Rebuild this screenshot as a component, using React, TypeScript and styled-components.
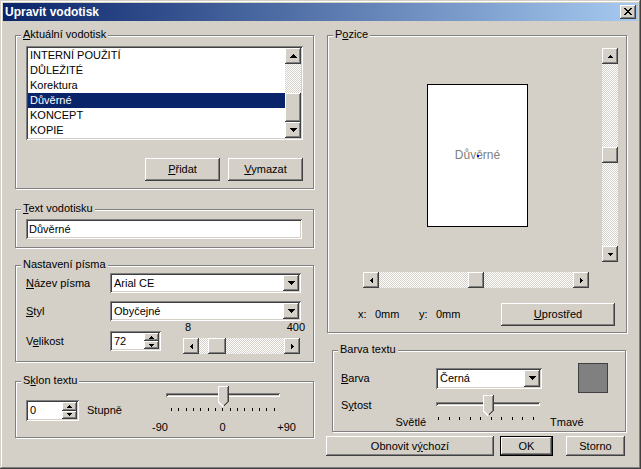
import React from 'react';
import styled, { createGlobalStyle, css } from 'styled-components';

const FACE = '#D4D0C8';

const GlobalStyle = createGlobalStyle`
  html, body { margin: 0; padding: 0; background: ${FACE}; }
  *, *::before, *::after { box-sizing: border-box; }
`;

const raised = css`
  background: ${FACE};
  box-shadow: inset -1px -1px #404040, inset 1px 1px #fff, inset -2px -2px #808080, inset 2px 2px ${FACE};
`;

const sunken = css`
  background: #fff;
  box-shadow: inset 1px 1px #808080, inset -1px -1px #fff, inset 2px 2px #404040, inset -2px -2px ${FACE};
`;

const checker = css`
  background-color: #fff;
  background-image: conic-gradient(${FACE} 25%, transparent 0 50%, ${FACE} 0 75%, transparent 0);
  background-size: 2px 2px;
`;

const Window = styled.div`
  width: 641px;
  height: 469px;
  padding: 3px;
  background: ${FACE};
  box-shadow: inset -1px -1px #404040, inset 1px 1px ${FACE}, inset -2px -2px #808080, inset 2px 2px #fff;
  font-family: "Liberation Sans", Arial, sans-serif;
  font-size: 11px;
  line-height: 13px;
  color: #000;
  display: flex;
  flex-direction: column;
`;

const TitleBar = styled.div`
  height: 18px;
  flex: none;
  display: flex;
  align-items: center;
  justify-content: space-between;
  padding: 0 2px 0 2px;
  background: linear-gradient(to right, #0a246a, #a6caf0);
  color: #fff;
  font-weight: bold;
  font-size: 12px;
`;

const CloseButton = styled.div`
  ${raised};
  width: 16px;
  height: 14px;
  display: flex;
  align-items: center;
  justify-content: center;
  padding-bottom: 1px;
`;

const Body = styled.div`
  flex: 1;
  display: flex;
  gap: 12px;
  padding: 14px 0 0 12px;
`;

const Column = styled.div<{ $w: number }>`
  width: ${p => p.$w}px;
  display: flex;
  flex-direction: column;
`;

const Group = styled.div<{ $h: number; $mt?: number; $ml?: number; $w?: number; $pad: string }>`
  position: relative;
  flex: none;
  height: ${p => p.$h}px;
  width: ${p => (p.$w ? `${p.$w}px` : 'auto')};
  margin-top: ${p => p.$mt ?? 0}px;
  margin-left: ${p => p.$ml ?? 0}px;
  padding: ${p => p.$pad};
  border: 1px solid #808080;
  box-shadow: inset 1px 1px #fff, 1px 1px #fff;
`;

const Caption = styled.span`
  position: absolute;
  top: -8px;
  left: 5px;
  padding: 0 2px;
  background: ${FACE};
  line-height: 13px;
`;

const ListBox = styled.div`
  ${sunken};
  width: 277px;
  height: 94px;
  padding: 2px;
  display: flex;
`;

const ListItems = styled.div`
  flex: 1;
  overflow: hidden;
`;

const ListRow = styled.div<{ $selected?: boolean }>`
  height: 15px;
  line-height: 15px;
  padding-left: 2px;
  white-space: nowrap;
  background: ${p => (p.$selected ? '#0a246a' : 'transparent')};
  color: ${p => (p.$selected ? '#fff' : '#000')};
`;

const ButtonRow = styled.div<{ $mt?: number }>`
  display: flex;
  justify-content: flex-end;
  gap: 8px;
  margin-top: ${p => p.$mt ?? 0}px;
`;

const Button = styled.button<{ $w: number; $h: number; $ml?: number; $default?: boolean }>`
  ${raised};
  border: 0;
  margin: 0 0 0 ${p => p.$ml ?? 0}px;
  padding: 0;
  flex: none;
  width: ${p => p.$w}px;
  height: ${p => p.$h}px;
  font: inherit;
  color: #000;
  ${p =>
    p.$default &&
    css`
      box-shadow: inset 0 0 0 1px #000, inset -2px -2px #404040, inset 2px 2px #fff, inset -3px -3px #808080;
    `}
`;

const TextField = styled.div<{ $w: number }>`
  ${sunken};
  width: ${p => p.$w}px;
  height: 20px;
  padding: 2px 2px 2px 3px;
  line-height: 16px;
`;

const FormRow = styled.div<{ $mt?: number; $end?: boolean }>`
  display: flex;
  align-items: ${p => (p.$end ? 'flex-end' : 'center')};
  margin-top: ${p => p.$mt ?? 0}px;
`;

const FieldLabel = styled.span<{ $w: number; $mb?: number }>`
  width: ${p => p.$w}px;
  flex: none;
  margin-bottom: ${p => p.$mb ?? 0}px;
`;

const ComboBox = styled.div<{ $w: number; $h?: number }>`
  ${sunken};
  width: ${p => p.$w}px;
  height: ${p => p.$h ?? 20}px;
  padding: 2px;
  display: flex;
  align-items: stretch;
`;

const ComboText = styled.span`
  flex: 1;
  padding-left: 2px;
  display: flex;
  align-items: center;
`;

const DropButton = styled.div`
  ${raised};
  width: 16px;
  flex: none;
  display: flex;
  align-items: center;
  justify-content: center;
`;

const SpinBox = styled.div<{ $w: number; $h: number; $mt?: number; $mb?: number }>`
  ${sunken};
  width: ${p => p.$w}px;
  height: ${p => p.$h}px;
  margin-top: ${p => p.$mt ?? 0}px;
  margin-bottom: ${p => p.$mb ?? 0}px;
  padding: 2px;
  display: flex;
  flex: none;
`;

const SpinText = styled.span`
  flex: 1;
  padding-left: 2px;
  display: flex;
  align-items: center;
`;

const SpinButtons = styled.div`
  width: 15px;
  display: flex;
  flex-direction: column;
`;

const SpinButton = styled.div`
  ${raised};
  flex: 1;
  display: flex;
  align-items: center;
  justify-content: center;
`;

const SizeScale = styled.div`
  width: 117px;
  margin-left: 22px;
  display: flex;
  flex-direction: column;
`;

const ScaleLabels = styled.div<{ $mt?: number; $pl?: number; $pr?: number }>`
  display: flex;
  justify-content: space-between;
  margin-top: ${p => p.$mt ?? 0}px;
  padding-left: ${p => p.$pl ?? 0}px;
  margin-right: ${p => -(p.$pr ?? 0)}px;
`;

const Scroll = styled.div<{ $vertical?: boolean; $length: number; $mt?: number }>`
  display: flex;
  flex: none;
  flex-direction: ${p => (p.$vertical ? 'column' : 'row')};
  width: ${p => (p.$vertical ? 16 : p.$length)}px;
  height: ${p => (p.$vertical ? p.$length : 16)}px;
  margin-top: ${p => p.$mt ?? 0}px;
`;

const ScrollButton = styled.div`
  ${raised};
  width: 16px;
  height: 16px;
  flex: none;
  display: flex;
  align-items: center;
  justify-content: center;
`;

const Gutter = styled.div<{ $size?: number }>`
  ${checker};
  flex: ${p => (p.$size != null ? `0 0 ${p.$size}px` : '1 1 0')};
`;

const Thumb = styled.div<{ $size: number }>`
  ${raised};
  flex: 0 0 ${p => p.$size}px;
`;

const TiltGrid = styled.div`
  display: grid;
  grid-template-columns: 61px 65px 144px;
  align-items: start;
`;

const UnitText = styled.span`
  margin-top: 18px;
`;

const SliderBlock = styled.div`
  display: flex;
  flex-direction: column;
`;

const TrackWrap = styled.div<{ $w: number; $ml?: number }>`
  width: ${p => p.$w}px;
  margin-left: ${p => p.$ml ?? 0}px;
`;

const Track = styled.div`
  position: relative;
  height: 21px;
  padding-top: 7px;
`;

const Groove = styled.div`
  height: 4px;
  background: ${FACE};
  box-shadow: inset 1px 1px #808080, inset -1px -1px #fff, inset 2px 2px #404040, inset -2px -2px ${FACE};
`;

const ThumbHolder = styled.div`
  position: absolute;
  top: 0;
  left: calc(50% - 5px);
  width: 11px;
  height: 21px;
`;

const TickRow = styled.div<{ $pl: number; $pr: number; $mt?: number }>`
  display: flex;
  justify-content: space-between;
  height: 3px;
  margin-top: ${p => p.$mt ?? 0}px;
  padding: 0 ${p => p.$pr}px 0 ${p => p.$pl}px;
`;

const Tick = styled.i`
  width: 1px;
  height: 3px;
  background: #000;
`;

const Canvas = styled.div`
  display: grid;
  grid-template-columns: 226px 16px;
  grid-template-rows: 214px 16px;
  column-gap: 13px;
  row-gap: 10px;
  width: 255px;
  margin-left: 5px;
`;

const PageCell = styled.div`
  position: relative;
`;

const Page = styled.div`
  position: relative;
  width: 101px;
  height: 143px;
  margin: 36px 0 0 64px;
  background: #fff;
  border: 1px solid #000;
  display: flex;
  align-items: center;
  justify-content: center;
  color: #808080;
  font-size: 12px;
`;

const Anchor = styled.i`
  position: absolute;
  left: 49px;
  top: 70px;
  width: 2px;
  height: 2px;
  background: #0000ff;
`;

const PositionRow = styled.div`
  display: flex;
  align-items: center;
  margin-top: 15px;
`;

const CoordCell = styled.span<{ $w: number }>`
  width: ${p => p.$w}px;
  flex: none;
`;

const ColorRow = styled.div`
  display: flex;
  align-items: center;
  height: 30px;
`;

const Swatch = styled.div`
  width: 30px;
  height: 30px;
  margin-left: auto;
  background: #808080;
  border: 1px solid #404040;
`;

const SatGrid = styled.div`
  display: grid;
  grid-template-columns: 95px 104px auto;
  grid-template-rows: 21px 13px;
  margin-top: 2px;
`;

const SatLabel = styled.span<{ $end?: boolean }>`
  align-self: center;
  justify-self: ${p => (p.$end ? 'end' : 'start')};
  margin-right: ${p => (p.$end ? 10 : 0)}px;
`;

const EndLabel = styled.span`
  margin-left: 10px;
`;

const BottomButtons = styled.div`
  display: flex;
  margin-top: 4px;
`;

type Dir = 'up' | 'down' | 'left' | 'right';

function Tri({ dir, n }: { dir: Dir; n: number }) {
  const vertical = dir === 'up' || dir === 'down';
  const w = vertical ? 2 * n - 1 : n;
  const h = vertical ? n : 2 * n - 1;
  const rects = Array.from({ length: n }, (_, i) => {
    const k = dir === 'up' || dir === 'left' ? i : n - 1 - i;
    return vertical ? (
      <rect key={i} x={n - 1 - k} y={i} width={2 * k + 1} height={1} />
    ) : (
      <rect key={i} x={i} y={n - 1 - k} width={1} height={2 * k + 1} />
    );
  });
  return (
    <svg width={w} height={h} viewBox={`0 0 ${w} ${h}`} shapeRendering="crispEdges" fill="#000">
      {rects}
    </svg>
  );
}

function CloseGlyph() {
  return (
    <svg width="8" height="7" viewBox="0 0 8 7" shapeRendering="crispEdges" fill="#000">
      {Array.from({ length: 7 }, (_, i) => (
        <g key={i}>
          <rect x={i} y={i} width={2} height={1} />
          <rect x={6 - i} y={i} width={2} height={1} />
        </g>
      ))}
    </svg>
  );
}

function SliderThumb() {
  return (
    <svg width="11" height="21" viewBox="0 0 11 21" shapeRendering="crispEdges">
      <polygon points="0,0 11,0 11,16 5.5,21 0,16" fill={FACE} />
      <polyline points="0.5,16 0.5,0.5 10,0.5" fill="none" stroke="#fff" />
      <line x1="0.5" y1="16" x2="5" y2="20.5" stroke="#fff" />
      <polyline points="10.5,0 10.5,15.5 5.5,20.5" fill="none" stroke="#404040" />
      <polyline points="9.5,1 9.5,15.5 5.5,19.5" fill="none" stroke="#808080" />
    </svg>
  );
}

type ScrollProps = { vertical?: boolean; length: number; thumb: number; before?: number; arrow?: number; mt?: number };

function ScrollBar({ vertical, length, thumb, before, arrow = 3, mt }: ScrollProps) {
  return (
    <Scroll $vertical={vertical} $length={length} $mt={mt}>
      <ScrollButton>
        <Tri dir={vertical ? 'up' : 'left'} n={arrow} />
      </ScrollButton>
      <Gutter $size={before} />
      <Thumb $size={thumb} />
      <Gutter />
      <ScrollButton>
        <Tri dir={vertical ? 'down' : 'right'} n={arrow} />
      </ScrollButton>
    </Scroll>
  );
}

function Combo({ w, h, value }: { w: number; h?: number; value: string }) {
  return (
    <ComboBox $w={w} $h={h}>
      <ComboText>{value}</ComboText>
      <DropButton>
        <Tri dir="down" n={4} />
      </DropButton>
    </ComboBox>
  );
}

function Spin({ w, h, value, mt, mb }: { w: number; h: number; value: string; mt?: number; mb?: number }) {
  return (
    <SpinBox $w={w} $h={h} $mt={mt} $mb={mb}>
      <SpinText>{value}</SpinText>
      <SpinButtons>
        <SpinButton>
          <Tri dir="up" n={3} />
        </SpinButton>
        <SpinButton>
          <Tri dir="down" n={3} />
        </SpinButton>
      </SpinButtons>
    </SpinBox>
  );
}

function Trackbar() {
  return (
    <Track>
      <Groove />
      <ThumbHolder>
        <SliderThumb />
      </ThumbHolder>
    </Track>
  );
}

function Ticks({ count, pl, pr, mt }: { count: number; pl: number; pr: number; mt?: number }) {
  return (
    <TickRow $pl={pl} $pr={pr} $mt={mt}>
      {Array.from({ length: count }, (_, i) => (
        <Tick key={i} />
      ))}
    </TickRow>
  );
}

const watermarks = ['INTERNÍ POUŽITÍ', 'DŮLEŽITÉ', 'Korektura', 'Důvěrné', 'KONCEPT', 'KOPIE'];

export default function App() {
  return (
    <>
      <GlobalStyle />
      <Window>
        <TitleBar>
          <span>Upravit vodotisk</span>
          <CloseButton>
            <CloseGlyph />
          </CloseButton>
        </TitleBar>
        <Body>
          <Column $w={299}>
            <Group $h={154} $pad="10px 10px 0 10px">
              <Caption>
                <u>A</u>ktuální vodotisk
              </Caption>
              <ListBox>
                <ListItems>
                  {watermarks.map((m, i) => (
                    <ListRow key={m} $selected={i === 3}>
                      {m}
                    </ListRow>
                  ))}
                </ListItems>
                <ScrollBar vertical length={90} thumb={29} before={29} arrow={4} />
              </ListBox>
              <ButtonRow $mt={18}>
                <Button $w={75} $h={23}>
                  <u>P</u>řidat
                </Button>
                <Button $w={75} $h={23}>
                  <u>V</u>ymazat
                </Button>
              </ButtonRow>
            </Group>

            <Group $h={39} $mt={20} $pad="9px 0 0 10px">
              <Caption>
                <u>T</u>ext vodotisku
              </Caption>
              <TextField $w={276}>Důvěrné</TextField>
            </Group>

            <Group $h={97} $mt={17} $pad="7px 0 0 10px">
              <Caption>Nastavení písma</Caption>
              <FormRow>
                <FieldLabel $w={84}>
                  <u>N</u>ázev písma
                </FieldLabel>
                <Combo w={191} value="Arial CE" />
              </FormRow>
              <FormRow $mt={8}>
                <FieldLabel $w={84}>
                  <u>S</u>tyl
                </FieldLabel>
                <Combo w={191} value="Obyčejné" />
              </FormRow>
              <FormRow $end>
                <FieldLabel $w={84} $mb={6}>
                  V<u>e</u>likost
                </FieldLabel>
                <Spin w={51} h={20} value="72" mb={3} />
                <SizeScale>
                  <ScaleLabels $pl={2} $pr={5}>
                    <span>8</span>
                    <span>400</span>
                  </ScaleLabels>
                  <ScrollBar length={117} thumb={18} before={9} mt={4} />
                </SizeScale>
              </FormRow>
            </Group>

            <Group $h={57} $mt={19} $pad="4px 0 0 10px">
              <Caption>
                S<u>k</u>lon textu
              </Caption>
              <TiltGrid>
                <Spin w={53} h={21} value="0" mt={14} />
                <UnitText>Stupně</UnitText>
                <SliderBlock>
                  <TrackWrap $w={114} $ml={14}>
                    <Trackbar />
                    <Ticks count={15} pl={5} pr={5} mt={1} />
                  </TrackWrap>
                  <ScaleLabels $mt={10}>
                    <span>-90</span>
                    <span>0</span>
                    <span>+90</span>
                  </ScaleLabels>
                </SliderBlock>
              </TiltGrid>
            </Group>
          </Column>

          <Column $w={312}>
            <Group $h={298} $w={300} $ml={1} $pad="12px 11px 0 30px">
              <Caption>
                P<u>o</u>zice
              </Caption>
              <Canvas>
                <PageCell>
                  <Page>
                    Důvěrné
                    <Anchor />
                  </Page>
                </PageCell>
                <ScrollBar vertical length={214} thumb={16} />
                <ScrollBar length={226} thumb={16} />
              </Canvas>
              <PositionRow>
                <CoordCell $w={17}>x:</CoordCell>
                <CoordCell $w={44}>0mm</CoordCell>
                <CoordCell $w={17}>y:</CoordCell>
                <CoordCell $w={40}>0mm</CoordCell>
                <Button $w={114} $h={23} style={{ marginLeft: 'auto' }}>
                  <u>U</u>prostřed
                </Button>
              </PositionRow>
            </Group>

            <Group $h={82} $w={294} $ml={6} $mt={17} $pad="12px 17px 0 8px">
              <Caption>Barva textu</Caption>
              <ColorRow>
                <FieldLabel $w={95}>
                  <u>B</u>arva
                </FieldLabel>
                <Combo w={106} h={21} value="Černá" />
                <Swatch />
              </ColorRow>
              <SatGrid>
                <SatLabel>
                  S<u>y</u>tost
                </SatLabel>
                <Trackbar />
                <span />
                <SatLabel $end>Světlé</SatLabel>
                <Ticks count={10} pl={2} pr={6} mt={1} />
                <EndLabel>Tmavé</EndLabel>
              </SatGrid>
            </Group>

            <BottomButtons>
              <Button $w={168} $h={20}>
                Obnovit v<u>ý</u>chozí
              </Button>
              <Button $w={53} $h={20} $ml={6} $default>
                OK
              </Button>
              <Button $w={59} $h={20} $ml={13}>
                Storno
              </Button>
            </BottomButtons>
          </Column>
        </Body>
      </Window>
    </>
  );
}
